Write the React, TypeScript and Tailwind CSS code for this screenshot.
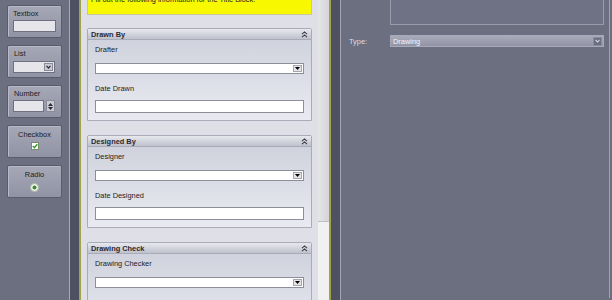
import React from "react";

const DoubleUp = () => (
  <svg width="7" height="7" viewBox="0 0 7 7" fill="none" stroke="#3c3c44" strokeWidth="1.1">
    <path d="M1 3.2 L3.5 0.9 L6 3.2" />
    <path d="M1 6.2 L3.5 3.9 L6 6.2" />
  </svg>
);

const Combo = ({ className = "" }: { className?: string }) => (
  <div className={"h-[11px] bg-white border border-[#8c8e9a] flex justify-end items-stretch p-[1px] " + className}>
    <div className="w-[9px] bg-[#e4e4e8] border border-[#a4a6b0] flex items-center justify-center">
      <svg width="5" height="3" viewBox="0 0 5 3">
        <path d="M0 0 L5 0 L2.5 3 Z" fill="#000" />
      </svg>
    </div>
  </div>
);

const TextIn = ({ className = "" }: { className?: string }) => (
  <div className={"h-[13px] bg-white border border-[#8c8e9a] " + className} />
);

const Card = ({
  title,
  l1,
  l2,
}: {
  title: string;
  l1: string;
  l2: string;
}) => (
  <div className="border border-[#a9abb9] rounded-t-[2px] shrink-0">
    <div className="h-[11px] bg-gradient-to-b from-[#e8e9ee] to-[#bfc1cc] border-b border-[#a9abb9] flex items-center justify-between pl-[3px] pr-[3px] font-bold text-[#2a2a32] leading-[9px]">
      <span>{title}</span>
      <DoubleUp />
    </div>
    <div className="bg-gradient-to-b from-[#d0d2dd] to-[#e9eaf1] px-[7px] pt-[5px] pb-[7px]">
      <div className="leading-[9px] h-[9px]">{l1}</div>
      <Combo className="mt-[9px]" />
      <div className="leading-[9px] h-[9px] mt-[10px]">{l2}</div>
      <TextIn className="mt-[7px]" />
    </div>
  </div>
);

const ToolBtn = ({ children }: { children: React.ReactNode }) => (
  <div className="h-[33px] shrink-0 rounded-[2px] border border-[#5a5c6c] bg-gradient-to-b from-[#a6a8b7] to-[#9093a4] shadow-[inset_1px_1px_0_#b8bac7]">
    {children}
  </div>
);

export default function App() {
  return (
    <div
      className="w-[612px] h-[300px] overflow-hidden flex text-[7.4px] text-[#1c1c22]"
      style={{ fontFamily: '"Liberation Sans", Arial, sans-serif' }}
    >
      {/* Left toolbox */}
      <div className="w-[70px] h-full bg-[#6c6f80] border-r border-[#a7a9b8] flex flex-col gap-[7px] pt-[5px] px-[7px]">
        <ToolBtn>
          <div className="pl-[5px] pt-[3px] leading-[9px]">Textbox</div>
          <div className="mx-[5px] mt-[2px] h-[12px] bg-[#e6e6ea] border border-[#6e7080]" />
        </ToolBtn>
        <ToolBtn>
          <div className="pl-[6px] pt-[3px] leading-[9px]">List</div>
          <div className="ml-[5px] mr-[6px] mt-[3px] h-[12px] bg-[#e6e6ea] border border-[#6e7080] flex justify-end p-[1px]">
            <div className="w-[9px] bg-[#c9cad4] border border-[#8a8c9a] flex items-center justify-center">
              <svg width="5" height="4" viewBox="0 0 5 4" fill="none" stroke="#2a2a34" strokeWidth="1.2">
                <path d="M0.5 0.8 L2.5 3 L4.5 0.8" />
              </svg>
            </div>
          </div>
        </ToolBtn>
        <ToolBtn>
          <div className="pl-[6px] pt-[3px] leading-[9px]">Number</div>
          <div className="flex mt-[2px] ml-[5px] mr-[6px] gap-[2px]">
            <div className="w-[32px] h-[12px] bg-[#e6e6ea] border border-[#6e7080]" />
            <div className="w-[9px] h-[12px] bg-[#c9cad4] border border-[#8a8c9a] flex flex-col items-center justify-center gap-[1px]">
              <svg width="5" height="3" viewBox="0 0 5 3">
                <path d="M0 3 L5 3 L2.5 0 Z" fill="#2a2a34" />
              </svg>
              <svg width="5" height="3" viewBox="0 0 5 3">
                <path d="M0 0 L5 0 L2.5 3 Z" fill="#2a2a34" />
              </svg>
            </div>
          </div>
        </ToolBtn>
        <ToolBtn>
          <div className="text-center pt-[4px] leading-[9px]">Checkbox</div>
          <div className="flex justify-center mt-[3px]">
            <div className="w-[8px] h-[8px] bg-white border border-[#7a8a6a] flex items-center justify-center">
              <svg width="6" height="6" viewBox="0 0 6 6" fill="none" stroke="#2f9a2a" strokeWidth="1.4">
                <path d="M0.8 3 L2.4 4.7 L5.3 1.2" />
              </svg>
            </div>
          </div>
        </ToolBtn>
        <ToolBtn>
          <div className="text-center pt-[4px] leading-[9px]">Radio</div>
          <div className="flex justify-center mt-[4px]">
            <svg width="9" height="9" viewBox="0 0 9 9">
              <circle cx="4.5" cy="4.5" r="4" fill="#f2f6ee" stroke="#a8b8a0" strokeWidth="1" />
              <circle cx="4.5" cy="4.5" r="2" fill="#3a8a32" />
            </svg>
          </div>
        </ToolBtn>
      </div>

      {/* dark separator */}
      <div className="w-[9px] h-full bg-[#4f5161]" />
      <div className="w-[2px] h-full bg-[#9fa34c]" />

      {/* Center form */}
      <div className="w-[248px] h-full flex bg-[#dfe0e7]">
        <div className="w-[237px] h-full overflow-hidden px-[6px]">
          <div className="mt-[-10px] h-[25px] bg-[#f8f800] border border-[#c9c99a] pl-[3px] pt-[4px] leading-[9px] whitespace-nowrap overflow-hidden">
            Fill out the following information for the Title Block.
          </div>
          <div className="flex flex-col gap-[14px] mt-[13px]">
            <Card title="Drawn By" l1="Drafter" l2="Date Drawn" />
            <Card title="Designed By" l1="Designer" l2="Date Designed" />
            <Card title="Drawing Check" l1="Drawing Checker" l2="Check Date" />
          </div>
        </div>
        {/* scrollbar */}
        <div className="w-[11px] h-full bg-[#f1f1f2] flex flex-col">
          <div className="h-[222px] bg-gradient-to-r from-[#e6e6e8] to-[#d4d4d8] border-b border-[#c0c0c4]" />
        </div>
      </div>

      <div className="w-[2px] h-full bg-[#9fa34c]" />
      <div className="w-[9px] h-full bg-[#4f5161]" />

      {/* Right properties */}
      <div className="w-[272px] h-full bg-[#6c6f80] border-l border-[#a3a5b4]">
        <div className="w-[269px] h-full border-r border-[#9ea0af]">
          <div className="ml-[49px] w-[214px] h-[27px] mt-[-2px] border border-[#9a9cac] bg-[#6f7284]" />
          <div className="flex items-center mt-[10px]">
            <div className="w-[49px] pl-[8px] text-[#dcdde6] leading-[9px]">Type:</div>
            <div className="w-[214px] h-[12px] border border-[#a8aabb] bg-gradient-to-b from-[#a9abba] to-[#9294a6] flex items-center justify-between pl-[2px] pr-[1px]">
              <span className="text-[#f4f4f8] leading-[9px]">Drawing</span>
              <div className="w-[9px] h-[9px] bg-[#6c6e80] border border-[#8a8c9c] flex items-center justify-center">
                <svg width="5" height="4" viewBox="0 0 5 4" fill="none" stroke="#d8d8e2" strokeWidth="1.1">
                  <path d="M0.5 0.8 L2.5 3 L4.5 0.8" />
                </svg>
              </div>
            </div>
          </div>
        </div>
      </div>
    </div>
  );
}
